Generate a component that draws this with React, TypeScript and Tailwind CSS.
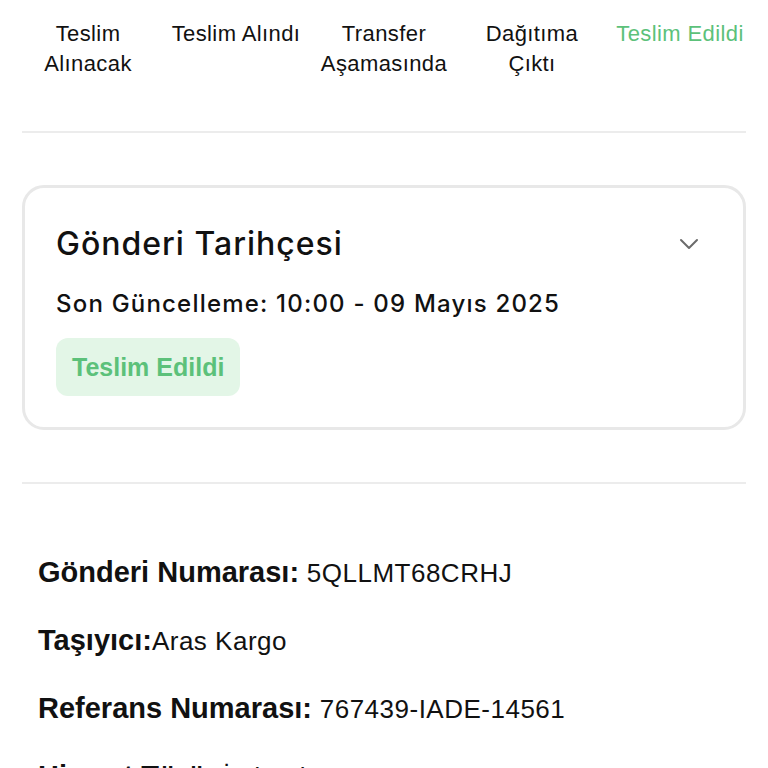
const STEPS = [
  { label: ["Teslim", "Alınacak"], active: false },
  { label: ["Teslim Alındı"], active: false },
  { label: ["Transfer", "Aşamasında"], active: false },
  { label: ["Dağıtıma", "Çıktı"], active: false },
  { label: ["Teslim Edildi"], active: true },
];

const DETAILS = [
  { label: "Gönderi Numarası:", value: " 5QLLMT68CRHJ" },
  { label: "Taşıyıcı:", value: "Aras Kargo" },
  { label: "Referans Numarası:", value: " 767439-IADE-14561" },
  { label: "Hizmet Türü:", value: " İade Al" },
];

const sf = "font-['Liberation_Sans',Arial,sans-serif]";
const geo = "font-['Inter','Noto_Sans',sans-serif]";

export default function App() {
  return (
    <div className="min-h-screen bg-white text-[#111]">
      {/* status steps */}
      <div className={`grid grid-cols-5 px-[14px] pt-[19px] ${sf}`}>
        {STEPS.map((s) => (
          <div
            key={s.label.join(" ")}
            className={`text-center text-[22px] leading-[30px] tracking-[0.4px] ${s.active ? "text-[#5cc17a]" : "text-[#111]"}`}
          >
            {s.label.map((l) => (
              <div key={l}>{l}</div>
            ))}
          </div>
        ))}
      </div>

      <div className="mx-[22px] mt-[52px] h-[2px] bg-[#ececec]" />

      {/* history card */}
      <div className="mx-[22px] mt-[52px] rounded-[22px] border-[3px] border-[#e8e8e8] px-[31px] pt-[36px] pb-[31px]">
        <div className="flex items-center justify-between">
          <h2 className={`${geo} text-[32px] font-medium leading-[40px] tracking-[1px]`}>
            Gönderi Tarihçesi
          </h2>
          <svg width="20" height="12" viewBox="0 0 20 12" className="mr-[13px]">
            <path d="M2 2l8 8 8-8" fill="none" stroke="#6b6b6b" strokeWidth="2" strokeLinecap="round" strokeLinejoin="round" />
          </svg>
        </div>
        <p className={`${geo} mt-[26px] text-[24px] font-medium leading-[28px] tracking-[1.2px]`}>
          Son Güncelleme: 10:00 - 09 Mayıs 2025
        </p>
        <div className="mt-[20px] flex">
          <span className={`${sf} rounded-[12px] bg-[#e3f6e7] px-[16px] py-[13px] text-[25px] font-bold leading-[32px] text-[#5cc17a]`}>
            Teslim Edildi
          </span>
        </div>
      </div>

      <div className="mx-[22px] mt-[52px] h-[2px] bg-[#ececec]" />

      {/* details */}
      <div className={`${sf} flex flex-col gap-[31px] px-[38px] pt-[70px]`}>
        {DETAILS.map((d) => (
          <div key={d.label} className="text-[29px] leading-[36px] whitespace-pre">
            <span className="font-bold">{d.label}</span>
            <span className="text-[26px] tracking-[0.5px]">{d.value}</span>
          </div>
        ))}
      </div>
    </div>
  );
}
